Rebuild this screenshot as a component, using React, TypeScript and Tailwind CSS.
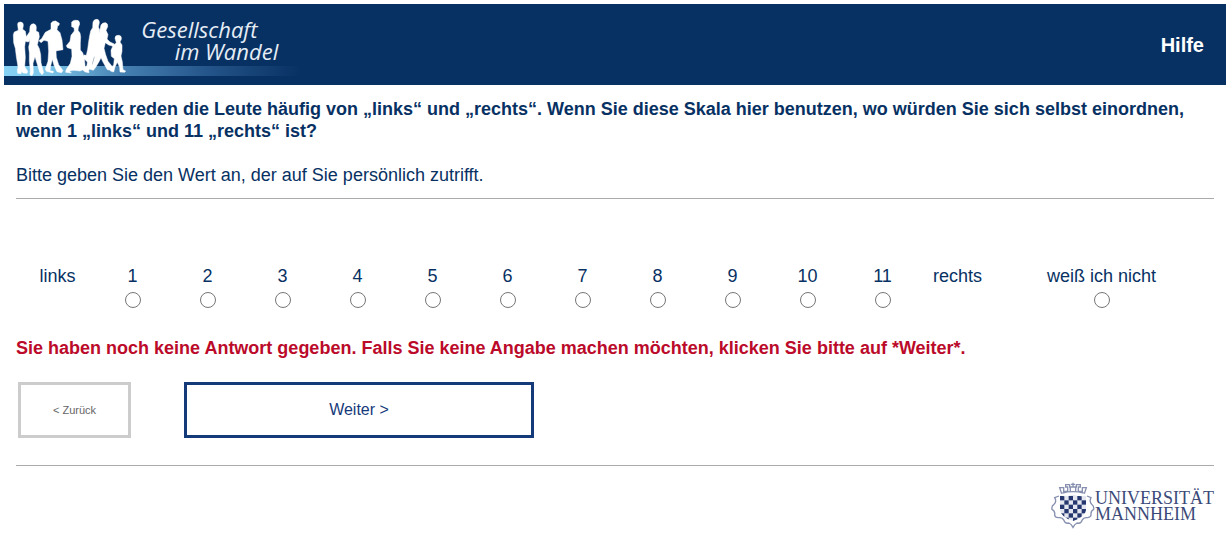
import React, { useState } from "react";

const scale = ["1", "2", "3", "4", "5", "6", "7", "8", "9", "10", "11"];

function BrandLogo() {
  return (
    <svg
      viewBox="0 0 900 243"
      className="block h-[81px] w-[300px]"
      role="img"
      aria-label="Gesellschaft im Wandel"
    >
      <defs>
        <linearGradient id="ground" x1="0" x2="1" y1="0" y2="0">
          <stop offset="0" stopColor="#86d2f4" />
          <stop offset="0.15" stopColor="#7cc4e8" />
          <stop offset="0.4" stopColor="#4680b2" />
          <stop offset="0.7" stopColor="#235388" />
          <stop offset="1" stopColor="#083163" />
        </linearGradient>
      </defs>
      <rect x="0" y="186" width="890" height="30" fill="url(#ground)" />
      <g fill="#fff" stroke="#fff" strokeWidth="1.5" transform="translate(-13 -12)">
        <path d="M54 74Q53 66 62 66Q72 67 71 76L69 88L77 94L80 112L90 120L86 126L77 124L75 140L77 172L75 200L84 214L82 220L70 219L66 213L64 221L54 220L53 212L55 200L50 170L47 145L42 128L41 104L44 96L56 91Z" />
        <path d="M91 80Q93 71 102 71Q110 73 110 83L109 93L117 97L119 110L116 122L113 134L119 146L123 164L124 188L132 218L127 224L120 216L112 190L106 170L100 190L101 219L97 227L91 224L92 210L89 184L89 158L87 142L90 126L88 117L78 123L73 119L85 103L90 95Z" />
        <path d="M154 70Q158 62 168 63L179 70L178 76L174 77L172 89L181 98L187 120L190 149L172 152L169 154L170 172L177 194L190 212L185 218L172 215L163 196L158 178L153 198L151 212L161 214L160 219L140 214L137 207L145 184L147 154L145 124L133 121L124 128L118 122L126 116L137 97L154 88Z" />
        <path d="M216 66Q221 59 232 61Q240 62 240 72L236 83L235 91L241 99L243 110L242 130L242 150L249 158L254 174L257 206L241 213L222 211L209 213L215 219L198 217L199 210L212 190L217 169L216 147L203 143L200 137L211 124L214 106L224 93L223 83L216 80Z" />
        <path d="M280 66Q283 57 292 58Q299 59 299 68L296 81L300 90L298 107L301 115L294 143L286 168L282 174L275 200L267 211L268 218L257 216L249 210L262 196L263 186L251 174L253 165L260 166L264 148L267 125L270 107L273 93L279 83Z" />
        <path d="M304 75Q308 67 318 68Q325 70 324 80L319 91L325 104L322 117L331 126L344 132L341 139L327 135L317 128L313 145L318 164L325 184L341 204L334 211L323 209L310 186L304 173L298 185L288 202L281 211L269 207L267 201L279 192L285 170L286 137L294 111L300 94Z" />
        <path d="M346 115Q346 105 357 106Q367 107 365 118L361 126L367 135L367 154L364 168L368 186L370 209L378 213L375 217L361 216L360 202L353 187L346 201L342 216L332 213L334 205L342 194L344 176L335 169L334 151L340 137L350 128Z" />
      </g>
      <text
        x="412"
        y="102"
        className="fill-[#e6edf5] font-['Open_Sans',sans-serif] text-[66px] font-medium italic"
      >
        Gesellschaft
      </text>
      <text
        x="512"
        y="168"
        className="fill-[#e6edf5] font-['Open_Sans',sans-serif] text-[66px] font-medium italic"
      >
        im Wandel
      </text>
    </svg>
  );
}

function Crest() {
  const squares: React.ReactElement[] = [];
  for (let r = 0; r < 6; r++) {
    for (let c = 0; c < 6; c++) {
      if ((r + c) % 2 === 0) {
        squares.push(
          <rect key={`${r}-${c}`} x={27 + c * 13} y={42 + r * 13} width="13" height="13" />,
        );
      }
    }
  }
  return (
    <svg viewBox="0 0 132 141" className="block h-[47px] w-[44px]" aria-hidden="true">
      <defs>
        <clipPath id="shield">
          <path d="M27 41Q47 45 66 38Q85 45 105 41V84Q103 105 66 117Q29 105 27 84Z" />
        </clipPath>
      </defs>
      <g fill="none" stroke="#8790b0" strokeWidth="4">
        <path
          d="M27 41Q47 45 66 38Q85 45 105 41V84Q103 105 66 117Q29 105 27 84Z"
          fill="#e4e7ef"
          stroke="none"
        />
        <path d="M24 42L11 47Q18 59 9 67Q1 72 3 82Q13 87 11 99Q12 107 22 107Q34 105 39 115Q42 126 54 123Q61 126 66 136Q71 126 78 123Q90 126 93 115Q98 105 110 107Q121 105 120 97Q119 87 128 82Q130 73 122 67Q114 59 120 47L108 42" />
        <path d="M32 35L26 17H38V28H50V15H44V8H56V15H76V8H88V15H82V28H94V17H106L100 35M58 30V17M74 30V17M66 13V2M60 7H72M34 33Q66 25 98 33" />
      </g>
      <g fill="#26386f" clipPath="url(#shield)">
        {squares}
      </g>
    </svg>
  );
}

export default function App() {
  const [answer, setAnswer] = useState("");

  return (
    <div className="bg-white pt-1 pr-[5px] pl-1 font-['Liberation_Sans',Arial,sans-serif] text-lg leading-[22px] text-[#083163]">
      <header className="flex items-center justify-between bg-[#083163] pr-[22px]">
        <BrandLogo />
        <a href="#hilfe" className="text-xl font-bold text-white">
          Hilfe
        </a>
      </header>

      <main className="px-3 pt-[13px]">
        <h1 className="font-bold">
          In der Politik reden die Leute häufig von „links“ und „rechts“. Wenn Sie diese Skala hier
          benutzen, wo würden Sie sich selbst einordnen, wenn 1 „links“ und 11 „rechts“ ist?
        </h1>
        <p className="mt-[22px]">Bitte geben Sie den Wert an, der auf Sie persönlich zutrifft.</p>
        <hr className="mt-3 border-[#aaaaaa]" />

        <form onSubmit={(e) => e.preventDefault()}>
          <fieldset
            aria-label="Links-rechts-Skala"
            className="mt-[66px] flex pr-0.5 pl-1 text-center"
          >
            <span className="w-[75px]">links</span>
            {scale.map((value) => (
              <label key={value} className="flex w-[75px] flex-col items-center gap-[5px]">
                {value}
                <input
                  type="radio"
                  name="skala"
                  value={value}
                  checked={answer === value}
                  onChange={() => setAnswer(value)}
                  className="size-4"
                />
              </label>
            ))}
            <span className="w-[75px]">rechts</span>
            <label className="mr-1 flex flex-1 flex-col items-center gap-[5px]">
              weiß ich nicht
              <input
                type="radio"
                name="skala"
                value="weiss-nicht"
                checked={answer === "weiss-nicht"}
                onChange={() => setAnswer("weiss-nicht")}
                className="size-4"
              />
            </label>
          </fieldset>

          <p role="alert" className="mt-[29px] font-bold text-[#bb0a2a]">
            Sie haben noch keine Antwort gegeben. Falls Sie keine Angabe machen möchten, klicken Sie
            bitte auf *Weiter*.
          </p>

          <div className="mt-[23px] flex gap-[53px] pl-0.5">
            <button
              type="button"
              className="h-14 w-[113px] border-3 border-[#cccccc] bg-white text-[11px] text-[#666666]"
            >
              &lt; Zurück
            </button>
            <button
              type="submit"
              className="h-14 w-[350px] border-3 border-[#153a7a] bg-white text-base text-[#153a7a]"
            >
              Weiter &gt;
            </button>
          </div>
        </form>

        <hr className="mt-[27px] border-[#aaaaaa]" />
      </main>

      <footer className="flex items-center justify-end px-3 pt-4">
        <Crest />
        <div className="font-['Liberation_Serif',serif] text-lg leading-4 text-[#3b4a78]">
          <div>UNIVERSITÄT</div>
          <div>MANNHEIM</div>
        </div>
      </footer>
    </div>
  );
}
